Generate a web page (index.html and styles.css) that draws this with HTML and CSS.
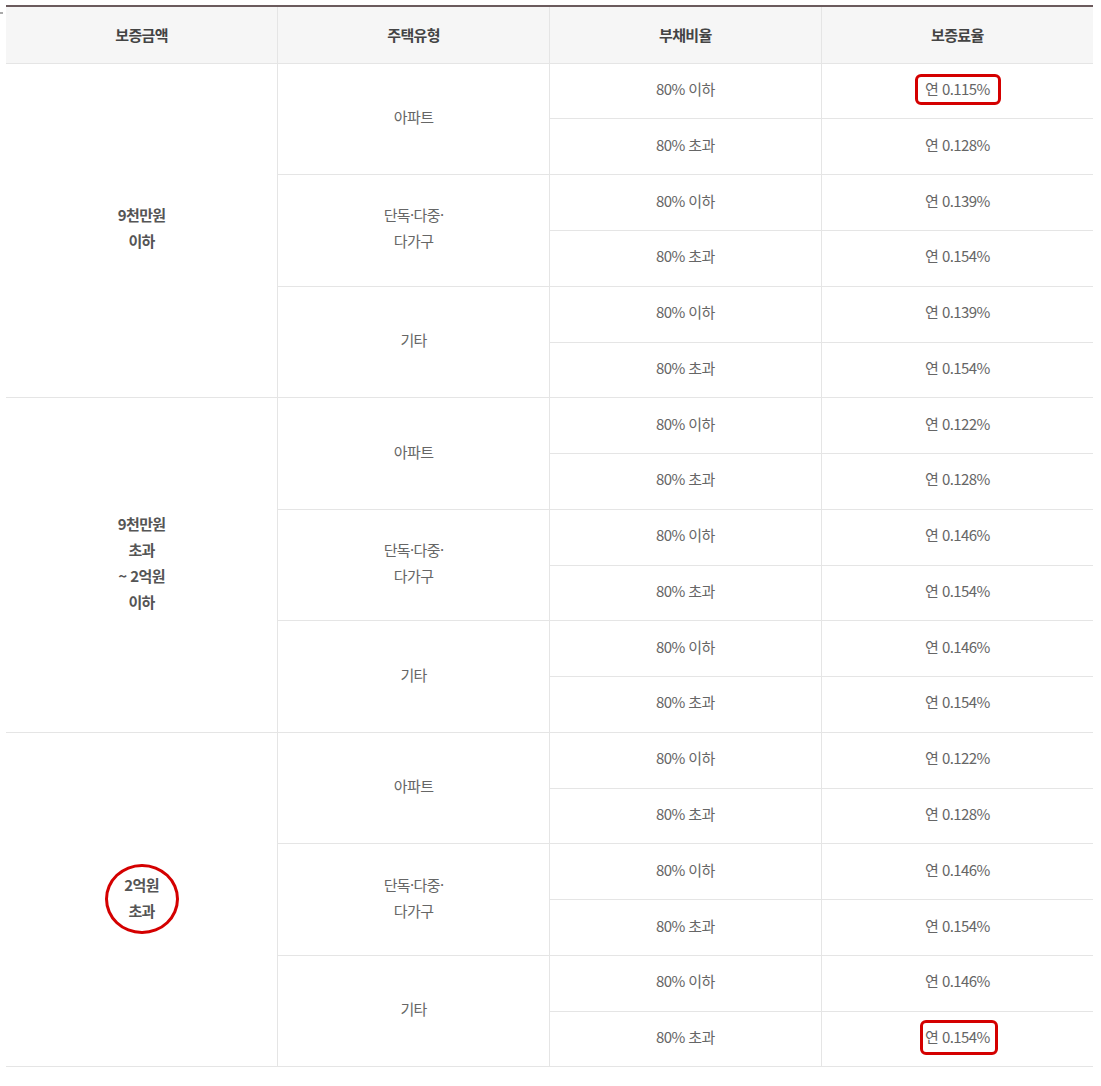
FILE: index.html
```html
<!DOCTYPE html>
<html lang="ko">
<head>
<meta charset="utf-8">
<link rel="stylesheet" href="styles.css">
</head>
<body>
<span class="edge-mark"></span>
<div class="wrap">
<table class="rate-table">
  <thead>
    <tr><th>보증금액</th><th>주택유형</th><th>부채비율</th><th>보증료율</th></tr>
  </thead>
  <tbody>
    <tr><td rowspan="6" class="amount">9천만원<br>이하</td><td rowspan="2">아파트</td><td>80% 이하</td><td><span class="mark-box">연 0.115%</span></td></tr>
    <tr><td>80% 초과</td><td>연 0.128%</td></tr>
    <tr><td rowspan="2">단독·다중·<br>다가구</td><td>80% 이하</td><td>연 0.139%</td></tr>
    <tr><td>80% 초과</td><td>연 0.154%</td></tr>
    <tr><td rowspan="2">기타</td><td>80% 이하</td><td>연 0.139%</td></tr>
    <tr><td>80% 초과</td><td>연 0.154%</td></tr>

    <tr><td rowspan="6" class="amount">9천만원<br>초과<br>~ 2억원<br>이하</td><td rowspan="2">아파트</td><td>80% 이하</td><td>연 0.122%</td></tr>
    <tr><td>80% 초과</td><td>연 0.128%</td></tr>
    <tr><td rowspan="2">단독·다중·<br>다가구</td><td>80% 이하</td><td>연 0.146%</td></tr>
    <tr><td>80% 초과</td><td>연 0.154%</td></tr>
    <tr><td rowspan="2">기타</td><td>80% 이하</td><td>연 0.146%</td></tr>
    <tr><td>80% 초과</td><td>연 0.154%</td></tr>

    <tr><td rowspan="6" class="amount"><span class="mark-circle">2억원<br>초과</span></td><td rowspan="2">아파트</td><td>80% 이하</td><td>연 0.122%</td></tr>
    <tr><td>80% 초과</td><td>연 0.128%</td></tr>
    <tr><td rowspan="2">단독·다중·<br>다가구</td><td>80% 이하</td><td>연 0.146%</td></tr>
    <tr><td>80% 초과</td><td>연 0.154%</td></tr>
    <tr><td rowspan="2">기타</td><td>80% 이하</td><td>연 0.146%</td></tr>
    <tr><td>80% 초과</td><td><span class="mark-box mark-box-b">연 0.154%</span></td></tr>
  </tbody>
</table>
</div>
</body>
</html>
```
FILE: styles.css
```css
html, body {
  margin: 0;
  padding: 0;
  background: #fff;
}
body {
  font-family: "Noto Sans CJK KR", "Noto Sans", sans-serif;
  position: relative;
}
.edge-mark {
  position: absolute;
  left: 0;
  top: 12px;
  width: 3px;
  height: 2px;
  background: #aaa;
}
.wrap {
  padding: 5px 8px 0 6px;
}
.rate-table {
  width: 1087px;
  border-collapse: collapse;
  table-layout: fixed;
  border-top: 2px solid #6b5b5d;
  font-size: 15px;
  letter-spacing: -0.6px;
  color: #666;
}
.rate-table th,
.rate-table td {
  border: 1px solid #e5e5e5;
  text-align: center;
  vertical-align: middle;
  padding: 0;
  line-height: 26px;
}
.rate-table tr > :first-child { border-left: none; }
.rate-table tr > :last-child { border-right: none; }
.rate-table tbody tr td.amount { border-left: none; }
.rate-table th {
  height: 55.7px;
  background: #f6f6f6;
  color: #444;
  font-weight: 700;
  border-top: none;
}
.rate-table td.amount {
  font-weight: 700;
  color: #555;
}
.rate-table td {
  height: 50.78px;
  padding-bottom: 4px;
}
.mark-box {
  position: relative;
  display: inline-block;
}
.mark-box::after {
  content: "";
  position: absolute;
  left: -10px;
  right: -11px;
  top: -2px;
  bottom: -3px;
  border: 3px solid #d40000;
  border-radius: 6px;
}
.mark-box-b::after {
  left: -5px;
  right: -8px;
  top: -4px;
  bottom: -5px;
}
.mark-circle {
  position: relative;
  display: inline-block;
}
.mark-circle::after {
  content: "";
  position: absolute;
  left: -19px;
  right: -20px;
  top: -8px;
  bottom: -10px;
  border: 3px solid #d40000;
  border-radius: 50%;
}
```
